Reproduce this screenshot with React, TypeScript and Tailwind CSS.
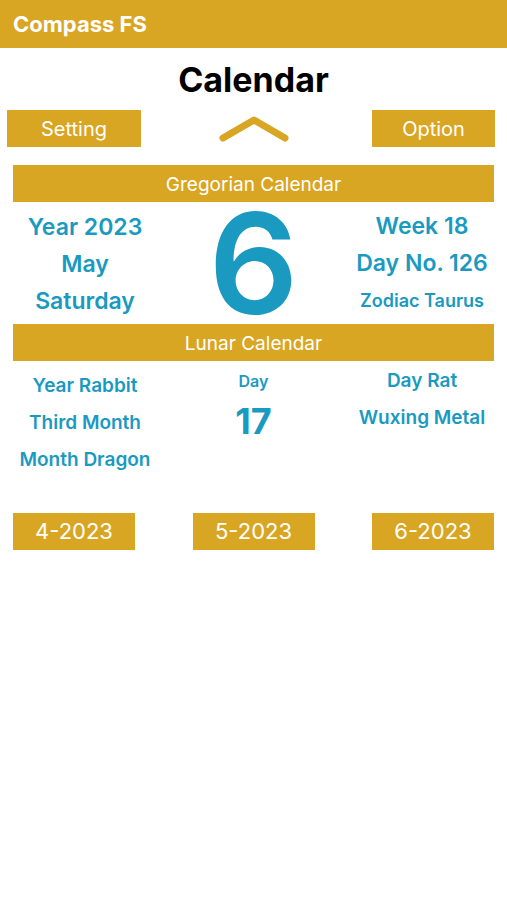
const gold = "bg-[#d9a623]";

function GoldBar({ label }: { label: string }) {
  return (
    <div className={`mx-[13px] h-[37px] ${gold} flex items-center justify-center text-white text-[19px] leading-[24px] pt-[2px]`}>
      {label}
    </div>
  );
}

function MonthButton({ label }: { label: string }) {
  return (
    <div className={`w-[122px] h-[37px] ${gold} flex items-center justify-center text-white text-[22px]`}>
      {label}
    </div>
  );
}

export default function App() {
  return (
    <div className="w-[507px] h-[900px] bg-white font-['Inter',sans-serif]">
      <div className={`h-12 ${gold} flex items-center px-[13px]`}>
        <span className="text-white text-[22px] font-bold">Compass FS</span>
      </div>

      <h1 className="mt-3 text-center text-[34px] leading-[40px] font-bold text-black">Calendar</h1>

      <div className="mt-[10px] flex items-center justify-between pl-[7px] pr-[12px]">
        <div className={`w-[134px] h-[37px] ${gold} flex items-center justify-center text-white text-[20px]`}>
          Setting
        </div>
        <svg width="72" height="30" viewBox="0 0 72 30" className="-ml-[5px]">
          <path
            d="M5 24 L36 6 L67 24"
            fill="none"
            stroke="#d9a623"
            strokeWidth="7"
            strokeLinecap="round"
            strokeLinejoin="round"
          />
        </svg>
        <div className={`w-[123px] h-[37px] ${gold} flex items-center justify-center text-white text-[20px]`}>
          Option
        </div>
      </div>

      <div className="mt-[18px]">
        <GoldBar label="Gregorian Calendar" />
      </div>

      <div className="mx-[13px] h-[122px] grid grid-cols-[144px_1fr_144px] text-[#1a9ac1]">
        <div className="pt-[7px] flex flex-col items-center text-[23px] leading-[37px] font-semibold">
          <span>Year 2023</span>
          <span>May</span>
          <span>Saturday</span>
        </div>
        <div className="h-[122px] flex justify-center text-[140px] leading-[122px] font-semibold">
          6
        </div>
        <div className="pt-[6px] flex flex-col items-center leading-[37px] font-semibold">
          <span className="text-[23px]">Week 18</span>
          <span className="text-[23px]">Day No. 126</span>
          <span className="text-[18px]">Zodiac Taurus</span>
        </div>
      </div>

      <GoldBar label="Lunar Calendar" />

      <div className="mx-[13px] h-[152px] grid grid-cols-[144px_1fr_144px] text-[#1a9ac1] font-semibold">
        <div className="pt-[6px] flex flex-col items-center text-[19px] leading-[37px]">
          <span>Year Rabbit</span>
          <span>Third Month</span>
          <span>Month Dragon</span>
        </div>
        <div className="pt-[8px] flex flex-col items-center">
          <span className="text-[16px] leading-[24px]">Day</span>
          <span className="mt-2 text-[36px] leading-[40px] font-bold">17</span>
        </div>
        <div className="pt-[1px] flex flex-col items-center text-[19px] leading-[37px]">
          <span>Day Rat</span>
          <span>Wuxing Metal</span>
        </div>
      </div>

      <div className="mx-[13px] flex justify-between">
        <MonthButton label="4-2023" />
        <MonthButton label="5-2023" />
        <MonthButton label="6-2023" />
      </div>
    </div>
  );
}
